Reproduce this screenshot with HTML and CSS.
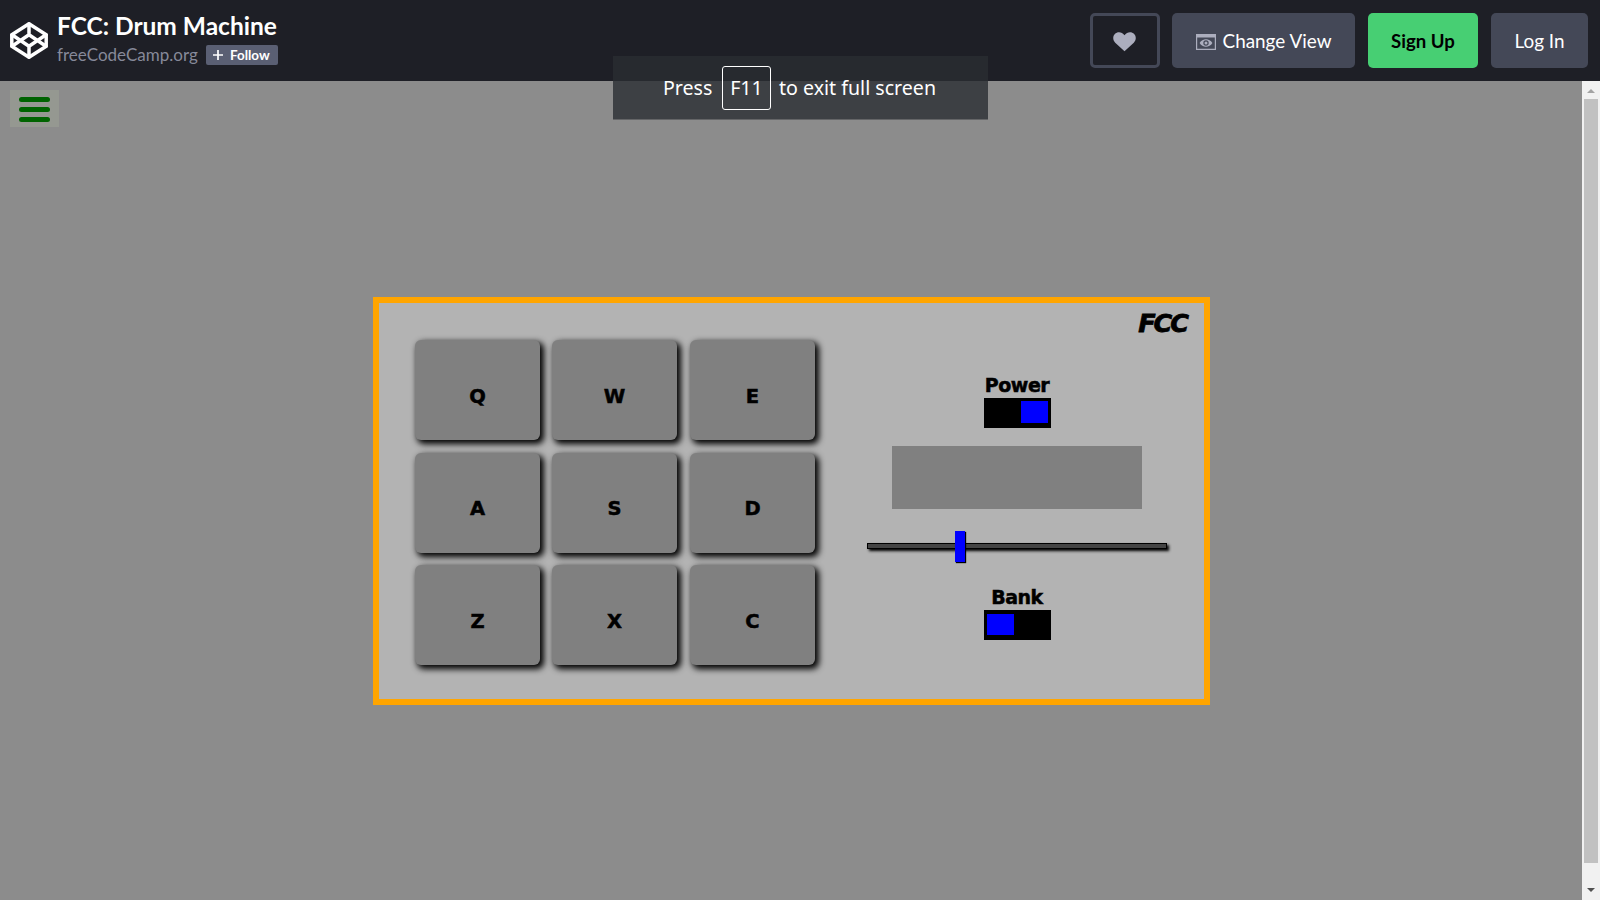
FILE: index.html
```html
<!DOCTYPE html>
<html lang="en">
<head>
<meta charset="utf-8">
<title>FCC: Drum Machine</title>
<link rel="stylesheet" href="styles.css">
</head>
<body>
<header class="topbar">
  <svg class="logo" viewBox="0 0 38 37" width="38" height="37" fill="none" stroke="#fff" stroke-width="3.5" stroke-linejoin="round" stroke-linecap="round">
    <path d="M19 1.8 36.2 12.8V24.2L19 35.2 1.8 24.2V12.8Z"/>
    <path d="M19 2V12.8M19 24.2V35M2 12.8 19 24.2 36 12.8M2 24.2 19 12.8 36 24.2"/>
  </svg>
  <div class="pen">
    <h1 class="pen-title"><span>FCC: Drum Machine</span></h1>
    <div class="pen-owner">
      <span class="owner-name">freeCodeCamp.org</span>
      <button class="follow"><svg width="10" height="10" viewBox="0 0 10 10" stroke="#fff" stroke-width="1.7"><path d="M5 0V10M0 5H10"/></svg><span>Follow</span></button>
    </div>
  </div>
  <nav class="actions">
    <button class="btn heart"><svg width="23" height="20" viewBox="0 0 23 20" fill="#acaebe"><path d="M11.5 19.3 2.2 10.7C-.3 8.2-.4 4.4 1.8 2.1 4.4-.6 8.9-.3 11.5 3.2 14.1-.3 18.6-.6 21.2 2.1 23.4 4.4 23.3 8.2 20.8 10.7Z"/></svg></button>
    <button class="btn view"><svg width="20" height="16" viewBox="0 0 20 16"><path fill="#acaebe" fill-rule="evenodd" d="M0 0H20V16H0ZM1.2 3.4V14.8H18.8V3.4Z"/><path fill="#acaebe" fill-rule="evenodd" d="M3.6 9C6.6 4 13.4 4 16.4 9 13.4 14 6.6 14 3.6 9ZM10 6.3A2.7 2.7 0 1 0 10 11.7 2.7 2.7 0 1 0 10 6.3Z"/><circle cx="10" cy="9" r="1.5" fill="#acaebe"/></svg><span>Change View</span></button>
    <button class="btn signup"><span>Sign Up</span></button>
    <button class="btn login"><span>Log In</span></button>
  </nav>
</header>

<div class="workspace">
  <main class="stage">
    <button class="menu"><i></i><i></i><i></i></button>
    <section class="machine">
      <div class="pads">
        <button class="pad">Q</button><button class="pad">W</button><button class="pad">E</button>
        <button class="pad">A</button><button class="pad">S</button><button class="pad">D</button>
        <button class="pad">Z</button><button class="pad">X</button><button class="pad">C</button>
      </div>
      <div class="side">
        <div class="brand"><span>FCC</span></div>
        <div class="controls">
          <div class="label"><span>Power</span></div>
          <div class="switch on"><i></i></div>
          <div class="display"></div>
          <div class="slider"><div class="knob"></div></div>
          <div class="label bank"><span>Bank</span></div>
          <div class="switch off"><i></i></div>
        </div>
      </div>
    </section>
  </main>
  <div class="scrollbar">
    <svg width="18" height="18" viewBox="0 0 18 18"><path fill="#a3a3a3" d="M5 12 9 8 13 12Z"/></svg>
    <div class="thumb"></div>
    <svg width="18" height="18" viewBox="0 0 18 18"><path fill="#505050" d="M5 6 9 10 13 6Z"/></svg>
  </div>
</div>

<div class="notice">
  <span class="press">Press</span>
  <span class="key"><span>F11</span></span>
  <span class="exit">to exit full screen</span>
</div>
</body>
</html>
```
FILE: styles.css
```css
* { box-sizing: border-box; }
body {
  margin: 0;
  height: 900px;
  overflow: hidden;
  display: flex;
  flex-direction: column;
  background: #8c8c8c;
  font-family: Lato, sans-serif;
}
button { border: 0; padding: 0; font-family: inherit; }

.topbar {
  height: 81px;
  flex: none;
  display: flex;
  align-items: flex-start;
  padding: 0 12px 0 10px;
  background: #1e1f26;
}
.logo { margin-top: 22px; flex: none; }
.pen { margin: 11px 0 0 9px; flex: 1; }
.pen-title {
  margin: 0;
  height: 30px;
  color: #fff;
  font-size: 24.5px;
  line-height: 30px;
  font-weight: 700;
}
.pen-owner { display: flex; margin-top: 4px; }
.owner-name {
  width: 149px;
  color: #868999;
  font-size: 17px;
  line-height: 19px;
  white-space: nowrap;
}
.follow {
  width: 72px;
  height: 20px;
  display: flex;
  align-items: center;
  gap: 7px;
  padding-left: 7px;
  border-radius: 2px;
  background: #5a5f73;
  color: #fff;
  font-size: 13.4px;
  font-weight: 700;
}
.actions { display: flex; margin-top: 13px; }
.btn {
  height: 55px;
  display: flex;
  align-items: center;
  justify-content: center;
  border-radius: 5px;
  background: #444857;
  color: #fff;
  font-size: 18.9px;
}
.heart { width: 70px; margin-right: 12px; padding: 2px 1px 0 0; border: 3px solid #444857; background: transparent; }
.view { width: 183px; margin-right: 13px; gap: 7px; }
.view svg { margin-top: 2px; }
.signup { width: 110px; margin-right: 13px; background: #47cf73; color: #000; font-size: 18.6px; font-weight: 700; }
.login { width: 97px; }

.workspace { flex: 1; display: flex; }
.stage { flex: 1; padding: 9px 0 0 10px; background: #8c8c8c; }
.menu {
  width: 49px;
  height: 37px;
  display: flex;
  flex-direction: column;
  gap: 5px;
  padding: 7px 9px;
  background: #959891;
}
.menu i { height: 5px; flex: none; border-radius: 2.5px; background: #006400; }

.machine {
  width: 837px;
  height: 408px;
  display: flex;
  margin: 170px 0 0 363px;
  padding-left: 36px;
  border: 6px solid #ffa500;
  background: #b3b3b3;
  font-family: "DejaVu Sans", sans-serif;
  font-weight: 700;
}
.pads {
  display: grid;
  grid-template-columns: 125px 126px 125px;
  grid-auto-rows: 100px;
  gap: 12.5px 12px;
  align-content: start;
  padding-top: 37px;
}
.pad {
  width: 125px;
  padding-top: 12px;
  border-radius: 6px;
  background: #808080;
  box-shadow: 3px 3px 6px 1px #000;
  color: #000;
  font-size: 19.5px;
  font-weight: 700;
  -webkit-text-stroke: 0.5px #000;
}
.side { flex: 1; display: flex; flex-direction: column; }
.brand {
  height: 64px;
  padding: 7px 17px 0 0;
  text-align: right;
  font-size: 25.5px;
  line-height: 26px;
  font-style: italic;
  letter-spacing: -2px;
  -webkit-text-stroke: 0.8px #000;
}
.controls { width: 300px; margin-left: 52px; display: flex; flex-direction: column; align-items: center; }
.label { height: 31px; padding-top: 7px; font-size: 19px; line-height: 22px; letter-spacing: -0.5px; -webkit-text-stroke: 0.5px #000; }
.switch { width: 67px; height: 30px; display: flex; padding: 3px; background: #000; }
.switch i { width: 27px; height: 22px; background: #00f; }
.on { justify-content: flex-end; }
.off { padding-top: 4px; }
.off i { height: 21px; }
.display { width: 250px; height: 63px; margin-top: 18px; background: #808080; }
.slider {
  width: 300px;
  height: 6px;
  margin-top: 34px;
  display: flex;
  align-items: center;
  padding-left: 87px;
  border: 1px solid #000;
  background: #444;
  box-shadow: 2px 2px 3px #000;
}
.knob { width: 10px; height: 31px; flex: none; background: #00f; box-shadow: 1px 1px 1px #000; }
.bank { margin-top: 30px; }

.scrollbar { width: 18px; display: flex; flex-direction: column; align-items: center; background: #f1f1f1; }
.thumb { width: 14px; height: 764px; margin-bottom: 19px; background: #c1c1c1; }

.notice {
  position: absolute;
  left: 613px;
  top: 56px;
  width: 375px;
  height: 64px;
  display: flex;
  padding: 10px 0 0 50px;
  border-bottom: 1px solid rgba(60, 62, 66, 0.5);
  background: rgba(41, 45, 50, 0.8);
  background-clip: padding-box;
  color: #fff;
  font-family: "Noto Sans", sans-serif;
  font-size: 19.6px;
  line-height: 43px;
  white-space: nowrap;
}
.press { width: 59px; }
.key { width: 49px; height: 44px; margin-right: 8px; border: 1.5px solid #fff; border-radius: 3px; line-height: 42px; text-align: center; }
```
